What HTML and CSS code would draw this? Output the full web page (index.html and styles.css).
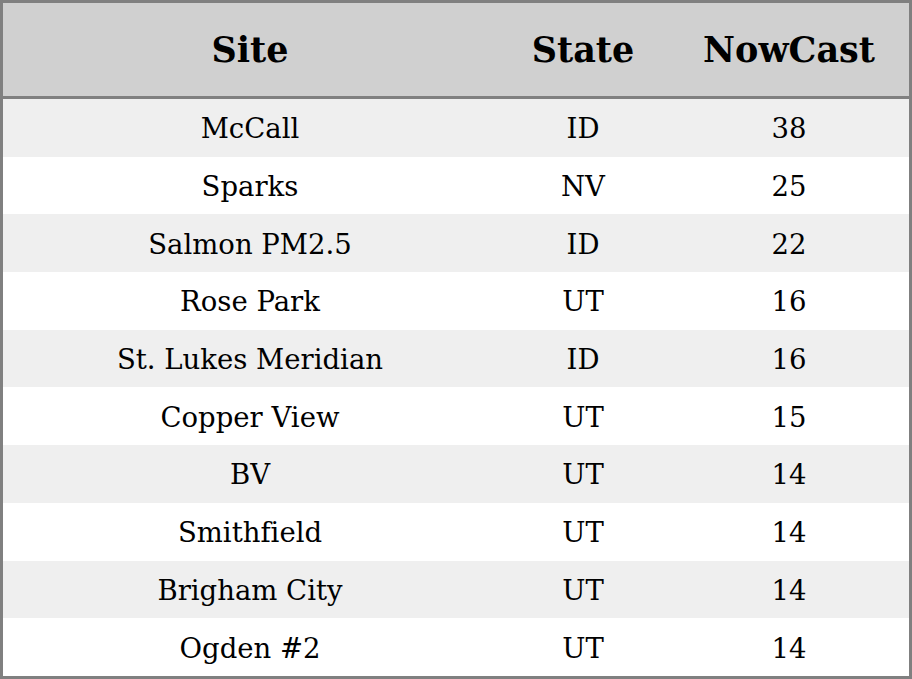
FILE: index.html
```html
<!DOCTYPE html>
<html>
<head>
<meta charset="utf-8">
<link rel="stylesheet" href="styles.css">
</head>
<body>
<table class="aq">
  <colgroup>
    <col class="c-site">
    <col class="c-state">
    <col class="c-now">
  </colgroup>
  <thead>
    <tr><th>Site</th><th>State</th><th>NowCast</th></tr>
  </thead>
  <tbody>
    <tr><td>McCall</td><td>ID</td><td>38</td></tr>
    <tr><td>Sparks</td><td>NV</td><td>25</td></tr>
    <tr><td>Salmon PM2.5</td><td>ID</td><td>22</td></tr>
    <tr><td>Rose Park</td><td>UT</td><td>16</td></tr>
    <tr><td>St. Lukes Meridian</td><td>ID</td><td>16</td></tr>
    <tr><td>Copper View</td><td>UT</td><td>15</td></tr>
    <tr><td>BV</td><td>UT</td><td>14</td></tr>
    <tr><td>Smithfield</td><td>UT</td><td>14</td></tr>
    <tr><td>Brigham City</td><td>UT</td><td>14</td></tr>
    <tr><td>Ogden #2</td><td>UT</td><td>14</td></tr>
  </tbody>
</table>
</body>
</html>
```
FILE: styles.css
```css
html, body {
  margin: 0;
  padding: 0;
  background: #ffffff;
}
.aq {
  width: 912px;
  height: 679px;
  border-collapse: separate;
  border-spacing: 0;
  border: 3px solid #808080;
  box-sizing: border-box;
  table-layout: fixed;
  font-family: "DejaVu Serif", serif;
  font-variant-ligatures: none;
  color: #000;
}
.c-site { width: 494px; }
.c-state { width: 172px; }
.c-now { width: 240px; }
.aq th {
  height: 93px;
  padding: 0;
  background: #d0d0d0;
  border-bottom: 3px solid #808080;
  font-size: 35px;
  font-weight: bold;
  text-align: center;
  vertical-align: middle;
}
.aq td {
  height: 56.7px;
  padding: 1px 0 0;
  font-size: 27.5px;
  text-align: center;
  vertical-align: middle;
}
.aq tbody tr:nth-child(odd) td {
  background: #efefef;
}
```
